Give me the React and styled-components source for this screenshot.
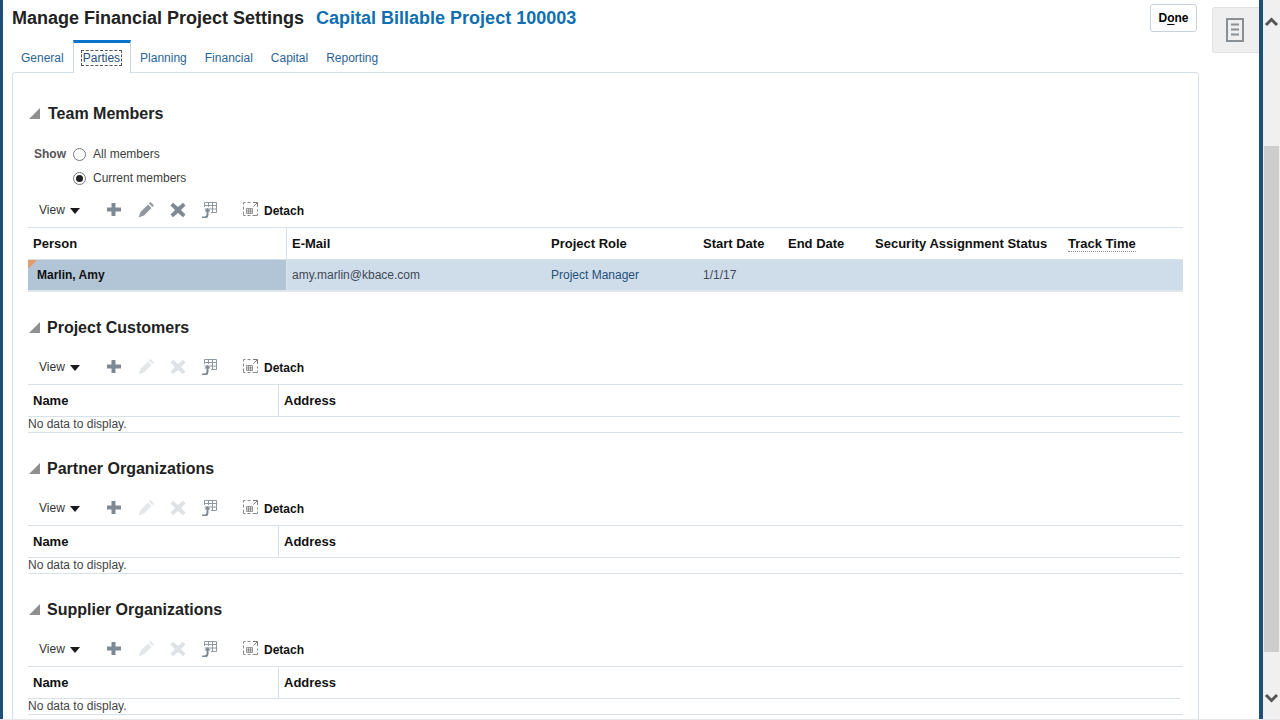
import React from 'react'
import styled, { createGlobalStyle } from 'styled-components'

const Global = createGlobalStyle`
  html, body { margin: 0; padding: 0; height: 100%; overflow: hidden; background: #fff; }
  body { font-family: "Liberation Sans", Arial, sans-serif; color: #1b1b1b; }
`

const Shell = styled.div`
  width: 1280px;
  height: 720px;
  display: flex;
  overflow: hidden;
  border-bottom: 1px solid #e6e6e6;
  box-sizing: border-box;
`
const EdgeBar = styled.div`
  width: ${p => p.$w}px;
  flex: none;
  background: #1f4e79;
`
const Main = styled.div`
  width: 1196px;
  flex: none;
  padding: 3px 0 0 9px;
  box-sizing: border-box;
`
const Header = styled.div`
  display: flex;
  align-items: flex-start;
  height: 37px;
`
const PageTitle = styled.h1`
  margin: 4px 0 0;
  font-size: 18px;
  line-height: 22px;
  font-weight: 700;
  color: #222;
`
const SubTitle = styled.span`
  margin: 4px 0 0 12px;
  font-size: 18px;
  line-height: 22px;
  font-weight: 700;
  color: #0f6fb0;
`
const DoneButton = styled.button`
  margin: 1px 2px 0 auto;
  width: 47px;
  height: 28px;
  padding: 0;
  background: #fff;
  border: 1px solid #c9d3dc;
  border-radius: 3px;
  font: 700 12px "Liberation Sans", Arial, sans-serif;
  color: #000;
  u { text-underline-offset: 2px; }
`
const Tabs = styled.div`
  display: flex;
  height: 33px;
  position: relative;
  z-index: 1;
`
const Tab = styled.div`
  box-sizing: border-box;
  height: ${p => (p.$active ? 33 : 32)}px;
  padding: 11px 9px 0;
  font-size: 12px;
  line-height: 15px;
  color: #2a6496;
  background: #fff;
  ${p => p.$active && `
    border-top: 3px solid #0572ce;
    border-left: 1px solid #c9d6e2;
    border-right: 1px solid #c9d6e2;
    padding: 8px 10px 0 9px;
    color: #27507a;
    span { outline: 1px dashed #555; outline-offset: 0; padding: 0 1px; margin: 0 -1px; }
  `}
`
const Panel = styled.div`
  width: 1187px;
  height: 660px;
  margin-top: -1px;
  box-sizing: border-box;
  border: 1px solid #d6dfe6;
  border-radius: 3px 3px 0 0;
  padding: 0 15px;
`
const SectionHead = styled.div`
  display: flex;
  align-items: center;
  gap: ${p => p.$gap}px;
  height: 22px;
  margin: ${p => p.$top}px 0 0 1px;
  font-size: 16px;
  font-weight: 700;
  color: #222;
`
const Disclosure = styled.i`
  width: 0;
  height: 0;
  margin-top: -1px;
  border-left: 11px solid transparent;
  border-bottom: 11px solid #8f8f8f;
`
const ShowRow = styled.div`
  display: flex;
  align-items: center;
  height: 24px;
  margin: ${p => p.$top || 0}px 0 0 6px;
  font-size: 12px;
  color: #3d3d3d;
`
const ShowLabel = styled.span`
  width: 39px;
  font-weight: 700;
  color: #555;
`
const Radio = styled.i`
  box-sizing: border-box;
  width: 13px;
  height: 13px;
  margin-right: 7px;
  border-radius: 50%;
  border: 1px solid #777;
  background: #fff;
  display: flex;
  align-items: center;
  justify-content: center;
  &::after {
    content: "";
    width: 7px;
    height: 7px;
    border-radius: 50%;
    background: ${p => (p.$on ? '#222' : 'transparent')};
  }
`
const Toolbar = styled.div`
  box-sizing: border-box;
  display: flex;
  align-items: center;
  height: 31px;
  margin-top: ${p => p.$top}px;
  padding: 0 0 3px 11px;
  font-size: 12px;
  color: #333;
`
const ViewMenu = styled.span`
  display: flex;
  align-items: center;
  width: 67px;
  gap: 5px;
  &::after {
    content: "";
    margin-top: 2px;
    border-left: 5px solid transparent;
    border-right: 5px solid transparent;
    border-top: 6px solid #1a1a1a;
  }
`
const ToolIcon = styled.svg`
  width: 16px;
  height: 16px;
  margin-right: 16px;
  flex: none;
`
const DetachIcon = styled.svg`
  width: 15px;
  height: 16px;
  margin: 0 6px 0 9px;
  flex: none;
`
const DetachLabel = styled.span`
  font-weight: 700;
  color: #111;
  padding-top: 1px;
`
const Table = styled.div`
  width: 1155px;
  border-top: 1px solid #d9e1e8;
`
const HeadRow = styled.div`
  display: flex;
  height: 31px;
  width: ${p => p.$w || 1155}px;
  border-bottom: 1px solid #d9e1e8;
`
const HeadCell = styled.div`
  box-sizing: border-box;
  width: ${p => p.$w}px;
  flex: ${p => (p.$w ? 'none' : 1)};
  padding-left: 5px;
  line-height: 31px;
  font-size: 13px;
  font-weight: 700;
  color: #111;
  white-space: nowrap;
  ${p => p.$rule && 'border-right: 1px solid #d9e1e8;'}
  b { border-bottom: 1px dotted #888; font-weight: 700; }
`
const DataRow = styled.div`
  display: flex;
  height: 30px;
  background: #cfdcea;
  border-bottom: 2px solid #dfe6ee;
`
const DataCell = styled.div`
  position: relative;
  box-sizing: border-box;
  width: ${p => p.$w}px;
  flex: ${p => (p.$w ? 'none' : 1)};
  padding-left: 5px;
  line-height: 30px;
  font-size: 12px;
  color: ${p => (p.$link ? '#27507a' : '#3f4a55')};
  white-space: nowrap;
`
const RowHeadCell = styled(DataCell)`
  background: #b1c5d6;
  background-clip: padding-box;
  border-right: 1px solid #dce5ef;
  padding-left: 9px;
  font-weight: 700;
  color: #111;
  &::before {
    content: "";
    position: absolute;
    left: 0;
    top: 0;
    border-top: 9px solid #e69a6c;
    border-right: 9px solid transparent;
  }
`
const EmptyRow = styled.div`
  height: 15px;
  line-height: 14px;
  font-size: 12px;
  color: #444;
  border-bottom: 1px solid #d9e1e8;
`
const Side = styled.div`
  width: 60px;
  flex: none;
  padding-top: 7px;
  box-sizing: border-box;
`
const SideTab = styled.div`
  width: 47px;
  height: 46px;
  margin-left: 13px;
  display: flex;
  align-items: center;
  justify-content: center;
  background: #efefef;
  border: 1px solid #e2e2e2;
  border-right: 0;
  border-radius: 3px 0 0 3px;
  box-sizing: border-box;
  padding-right: 2px;
`
const Scrollbar = styled.div`
  width: 17px;
  flex: none;
  background: #f0f0f0;
  display: flex;
  flex-direction: column;
  align-items: center;
`
const ScrollCap = styled.svg`
  width: 17px;
  height: 17px;
  flex: none;
  margin-top: ${p => p.$top || 0}px;
`
const Thumb = styled.div`
  width: 15px;
  height: 506px;
  margin: 116px 0 38px;
  background: #cdcdcd;
`

const Plus = () => (
  <ToolIcon viewBox="0 0 16 16">
    <path d="M5.500 1h4v4.500H15v4H9.500V14h-4V9.500H1v-4h4.500z" fill="#7e8a93" />
  </ToolIcon>
)
const Pencil = ({ off }) => (
  <ToolIcon viewBox="0 0 16 16" fill={off ? '#e4e7e9' : '#8f989f'}>
    <path d="M.5 15.500L2.500 10 10 2.500 13.500 6 6 13.500z" />
    <path d="M11 1.500L12.500 0 16 3.500 14.500 5z" />
  </ToolIcon>
)
const Cross = ({ off }) => (
  <ToolIcon viewBox="0 0 16 16">
    <path d="M3 .8L8 5l5-4.200 2.500 2.700L11 8l4.500 4.500-2.500 2.700L8 11l-5 4.200-2.500-2.700L5 8 .5 3.500z" fill={off ? '#dfe2e4' : '#7e8a93'} />
  </ToolIcon>
)
const Freeze = () => (
  <ToolIcon viewBox="0 0 16 16" fill="none" stroke="#8f989f">
    <path d="M2.500 .5h12v10H9M2.500 .5V5M2.500 3.500h12M2.500 7h12M6.500 .5V5M10.500 .5v10" />
    <path d="M0 15.500h2.500q3 0 3-3V9" stroke="#7e8a93" strokeWidth="2" />
    <path d="M2.500 9.500L5.500 6l3 3.500z" fill="#7e8a93" stroke="none" />
  </ToolIcon>
)
const Detach = () => (
  <DetachIcon viewBox="0 0 15 16" fill="none">
    <path d="M.5 2.500v-2h2M4.500 .5h3M.5 4.500v3M.5 9.500v4h2M4.500 13.500h3M9.500 13.500h5v-2M14.500 9.500v-2" stroke="#8a8a8a" />
    <path d="M10 .5h4.500V5M14 1l-3.500 3.500" stroke="#7a7a7a" />
    <path d="M3.500 6.500h6v5h-6zM3.500 8.200h6M3.500 9.900h6M5.500 6.500v5M7.500 6.500v5" stroke="#777" strokeWidth=".7" />
  </DetachIcon>
)

const TableToolbar = ({ top, disabled }) => (
  <Toolbar $top={top}>
    <ViewMenu>View</ViewMenu>
    <Plus />
    <Pencil off={disabled} />
    <Cross off={disabled} />
    <Freeze />
    <Detach />
    <DetachLabel>Detach</DetachLabel>
  </Toolbar>
)

const EmptySection = ({ title }) => (
  <>
    <SectionHead $top={25} $gap={7}><Disclosure />{title}</SectionHead>
    <TableToolbar top={14} disabled />
    <Table>
      <HeadRow $w={1152}>
        <HeadCell $w={251} $rule>Name</HeadCell>
        <HeadCell>Address</HeadCell>
      </HeadRow>
      <EmptyRow>No data to display.</EmptyRow>
    </Table>
  </>
)

export default function App() {
  return (
    <Shell>
      <Global />
      <EdgeBar $w={3} />
      <Main>
        <Header>
          <PageTitle>Manage Financial Project Settings</PageTitle>
          <SubTitle>Capital Billable Project 100003</SubTitle>
          <DoneButton>D<u>o</u>ne</DoneButton>
        </Header>
        <Tabs>
          <Tab>General</Tab>
          <Tab $active><span>Parties</span></Tab>
          <Tab>Planning</Tab>
          <Tab>Financial</Tab>
          <Tab>Capital</Tab>
          <Tab>Reporting</Tab>
        </Tabs>
        <Panel>
          <SectionHead $top={30} $gap={8}><Disclosure />Team Members</SectionHead>
          <ShowRow $top={17}>
            <ShowLabel>Show</ShowLabel><Radio />All members
          </ShowRow>
          <ShowRow>
            <ShowLabel /><Radio $on />Current members
          </ShowRow>
          <TableToolbar top={6} />
          <Table>
            <HeadRow>
              <HeadCell $w={259} $rule>Person</HeadCell>
              <HeadCell $w={259}>E-Mail</HeadCell>
              <HeadCell $w={152}>Project Role</HeadCell>
              <HeadCell $w={85}>Start Date</HeadCell>
              <HeadCell $w={87}>End Date</HeadCell>
              <HeadCell $w={193}>Security Assignment Status</HeadCell>
              <HeadCell><b>Track Time</b></HeadCell>
            </HeadRow>
            <DataRow>
              <RowHeadCell $w={259}>Marlin, Amy</RowHeadCell>
              <DataCell $w={259}>amy.marlin@kbace.com</DataCell>
              <DataCell $w={152} $link>Project Manager</DataCell>
              <DataCell $w={85}>1/1/17</DataCell>
              <DataCell />
            </DataRow>
          </Table>
          <EmptySection title="Project Customers" />
          <EmptySection title="Partner Organizations" />
          <EmptySection title="Supplier Organizations" />
        </Panel>
      </Main>
      <Side>
        <SideTab>
          <svg width="18" height="24" viewBox="0 0 18 24" fill="none" stroke="#8a8f93" strokeWidth="2">
            <path d="M1 1h16v22H1zM5 6.500h8M5 11.500h8M5 16.500h8" />
          </svg>
        </SideTab>
      </Side>
      <EdgeBar $w={4} />
      <Scrollbar>
        <ScrollCap $top={13} viewBox="0 0 17 17"><path d="M3 12l5.500-5.500L14 12" fill="none" stroke="#555" strokeWidth="3" /></ScrollCap>
        <Thumb />
        <ScrollCap viewBox="0 0 17 17"><path d="M3 5l5.500 5.500L14 5" fill="none" stroke="#555" strokeWidth="3" /></ScrollCap>
      </Scrollbar>
    </Shell>
  )
}
